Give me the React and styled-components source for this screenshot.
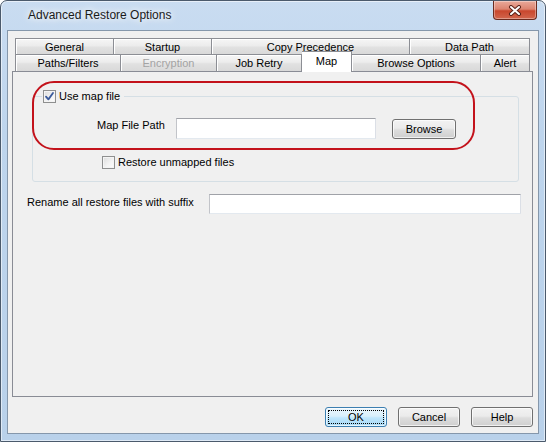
import React from "react";
import styled, { createGlobalStyle } from "styled-components";

const GlobalStyle = createGlobalStyle`
  html, body {
    margin: 0;
    padding: 0;
    background: #ffffff;
  }
  body {
    font-family: "Liberation Sans", Arial, sans-serif;
    font-size: 11px;
    color: #000;
  }
  * {
    box-sizing: border-box;
  }
`;

// window chrome
const Window = styled.div`
  width: 546px;
  height: 442px;
  display: flex;
  flex-direction: column;
  padding: 0 6px 7px 6px;
  border: 1px solid #4b5a6c;
  border-radius: 7px 7px 0 0;
  background: linear-gradient(180deg, #c9dcf1 0%, #bed5ed 30%, #b9d1ea 100%);
  box-shadow: inset 0 0 0 1px rgba(255, 255, 255, 0.55);
`;

const TitleBar = styled.div`
  height: 29px;
  display: flex;
  align-items: flex-start;
  padding-left: 21px;
`;

const Title = styled.span`
  line-height: 29px;
  font-size: 12px;
  color: #1a1a1a;
  text-shadow: 0 0 6px #ffffff, 0 0 10px rgba(255, 255, 255, 0.9);
`;

const CloseButton = styled.div`
  margin-left: auto;
  margin-right: 2px;
  width: 44px;
  height: 19px;
  display: flex;
  align-items: center;
  justify-content: center;
  border: 1px solid #6b2b1f;
  border-top: none;
  border-radius: 0 0 4px 4px;
  background: linear-gradient(180deg, #e9a99a 0%, #dc8470 45%, #c9472d 55%, #d2664d 100%);
  box-shadow: inset 0 0 0 1px rgba(255, 255, 255, 0.35);
`;

const Client = styled.div`
  flex: 1;
  display: flex;
  flex-direction: column;
  border: 1px solid #8597ab;
  background: #f0f0f0;
  padding: 7px 5px 6px 4px;
`;

// tab control
const TabControl = styled.div`
  flex: 1;
  display: flex;
  flex-direction: column;
`;

const TabRow = styled.div`
  display: flex;
  align-items: flex-end;
  height: ${(p) => p.h}px;
  padding: 0 3px;
`;

const Tab = styled.div`
  width: ${(p) => p.w}px;
  height: ${(p) => (p.active ? 21 : p.h)}px;
  display: flex;
  align-items: center;
  justify-content: center;
  border-top: 1px solid #8c8e94;
  border-right: 1px solid #8c8e94;
  border-left: ${(p) => (p.first ? "1px solid #8c8e94" : "none")};
  color: ${(p) => (p.disabled ? "#a3a3a3" : "#000")};
  white-space: nowrap;
  background: ${(p) =>
    p.active
      ? "#ffffff"
      : "linear-gradient(180deg, #f6f6f6 0%, #ececec 45%, #e1e1e1 55%, #d9d9d9 100%)"};
  box-shadow: inset 1px 1px 0 #ffffff;
  position: ${(p) => (p.active ? "relative" : "static")};
  z-index: ${(p) => (p.active ? 1 : "auto")};
  margin-bottom: ${(p) => (p.active ? "-1px" : "0")};
  padding-bottom: ${(p) => (p.active ? "3px" : "0")};
`;

const Panel = styled.div`
  position: relative;
  flex: 1;
  display: flex;
  flex-direction: column;
  border: 1px solid #898c95;
  background: #f0f0f0;
  padding: 17px 11px 0 14px;
`;

// red marker drawn over the map-file group
const Annotation = styled.div`
  position: absolute;
  left: 19px;
  top: 9px;
  width: 443px;
  height: 69px;
  border: 2px solid #c3121b;
  border-radius: 22px;
  pointer-events: none;
`;

const GroupBox = styled.fieldset`
  margin: 0 2px 0 5px;
  padding: 0 0 12px 0;
  border: 1px solid #d5dfe5;
  border-radius: 3px;
  min-width: 0;
`;

const Legend = styled.legend`
  margin-left: 9px;
  padding: 0 4px 0 1px;
  display: flex;
  align-items: center;
  gap: 3px;
  height: 14px;
  line-height: 14px;
`;

const CheckBox = styled.span`
  width: 13px;
  height: 13px;
  flex: none;
  display: inline-flex;
  align-items: center;
  justify-content: center;
  border: 1px solid #8e8f8f;
  background: linear-gradient(135deg, #dcdcdc 0%, #f4f4f4 60%, #fcfcfc 100%);
  box-shadow: inset 0 0 0 1px #f4f4f4;
`;

const FieldRow = styled.div`
  display: flex;
  align-items: flex-start;
  margin-top: 15px;
  padding-left: 64px;
`;

const FieldLabel = styled.span`
  width: ${(p) => p.w}px;
  flex: none;
  line-height: 14px;
  margin-top: ${(p) => p.mt || 0}px;
`;

const TextBox = styled.div`
  width: ${(p) => (p.w ? `${p.w}px` : "auto")};
  flex: ${(p) => (p.w ? "none" : 1)};
  height: ${(p) => p.h || 21}px;
  background: #ffffff;
  border: 1px solid #abadb3;
  border-top-color: #a0a2a8;
  border-left-color: #c2c4c9;
  border-right-color: #dbdfe6;
  border-bottom-color: #e3e9ef;
  box-shadow: inset 0 0 0 1px #ffffff;
`;

const Button = styled.div`
  position: relative;
  width: ${(p) => p.w}px;
  height: 20px;
  margin-top: ${(p) => p.mt || 0}px;
  margin-left: ${(p) => p.ml || 0}px;
  display: flex;
  align-items: center;
  justify-content: center;
  border: 1px solid ${(p) => (p.primary ? "#3c7fb1" : "#707070")};
  border-radius: 3px;
  background: ${(p) =>
    p.primary
      ? "linear-gradient(180deg, #eaf6fd 0%, #d9f0fc 45%, #bee6fd 55%, #a7d9f5 100%)"
      : "linear-gradient(180deg, #f2f2f2 0%, #ebebeb 45%, #dddddd 55%, #cfcfcf 100%)"};
  box-shadow: inset 0 0 0 1px rgba(255, 255, 255, 0.7);

  &::after {
    content: "";
    display: ${(p) => (p.primary ? "block" : "none")};
    position: absolute;
    inset: 2px;
    border: 1px dotted #000;
  }
`;

const CheckRow = styled.div`
  display: flex;
  align-items: center;
  gap: 3px;
  margin-top: 17px;
  padding-left: 69px;
  line-height: 13px;
`;

const RenameRow = styled.div`
  display: flex;
  align-items: flex-start;
  margin-top: 12px;
`;

const ButtonRow = styled.div`
  display: flex;
  justify-content: flex-end;
  gap: 11px;
  margin-top: 10px;
`;

const CheckMark = () => (
  <svg width="11" height="11" viewBox="0 0 11 11">
    <path
      d="M2 5.6 L4.4 8.4 L9 2"
      fill="none"
      stroke="#3b5b9c"
      strokeWidth="1.8"
      strokeLinecap="round"
      strokeLinejoin="round"
    />
  </svg>
);

const CloseGlyph = () => (
  <svg width="14" height="11" viewBox="0 0 14 11">
    <path d="M3 2 L11 9 M11 2 L3 9" stroke="#5a2218" strokeWidth="4" strokeLinecap="round" />
    <path d="M3 2 L11 9 M11 2 L3 9" stroke="#ffffff" strokeWidth="2" strokeLinecap="round" />
  </svg>
);

const topTabs = [
  { label: "General", w: 99 },
  { label: "Startup", w: 98 },
  { label: "Copy Precedence", w: 198 },
  { label: "Data Path", w: 120 },
];

const bottomTabs = [
  { label: "Paths/Filters", w: 106 },
  { label: "Encryption", w: 96, disabled: true },
  { label: "Job Retry", w: 85 },
  { label: "Map", w: 50, active: true },
  { label: "Browse Options", w: 129 },
  { label: "Alert", w: 49 },
];

const App = () => {
  return (
    <>
      <GlobalStyle />
      <Window>
        <TitleBar>
          <Title>Advanced Restore Options</Title>
          <CloseButton>
            <CloseGlyph />
          </CloseButton>
        </TitleBar>
        <Client>
          <TabControl>
            <TabRow h={16}>
              {topTabs.map((t, i) => (
                <Tab key={t.label} w={t.w} h={16} first={i === 0}>
                  {t.label}
                </Tab>
              ))}
            </TabRow>
            <TabRow h={17}>
              {bottomTabs.map((t, i) => (
                <Tab
                  key={t.label}
                  w={t.w}
                  h={17}
                  first={i === 0}
                  active={t.active}
                  disabled={t.disabled}
                >
                  {t.label}
                </Tab>
              ))}
            </TabRow>
            <Panel>
              <GroupBox>
                <Legend>
                  <CheckBox>
                    <CheckMark />
                  </CheckBox>
                  Use map file
                </Legend>
                <FieldRow>
                  <FieldLabel w={79}>Map File Path</FieldLabel>
                  <TextBox w={200} />
                  <Button w={64} mt={1} ml={16}>
                    Browse
                  </Button>
                </FieldRow>
                <CheckRow>
                  <CheckBox />
                  Restore unmapped files
                </CheckRow>
              </GroupBox>
              <RenameRow>
                <FieldLabel w={182} mt={1}>
                  Rename all restore files with suffix
                </FieldLabel>
                <TextBox h={20} />
              </RenameRow>
              <Annotation />
            </Panel>
          </TabControl>
          <ButtonRow>
            <Button w={62} primary>
              OK
            </Button>
            <Button w={62}>Cancel</Button>
            <Button w={62}>Help</Button>
          </ButtonRow>
        </Client>
      </Window>
    </>
  );
};

export default App;
